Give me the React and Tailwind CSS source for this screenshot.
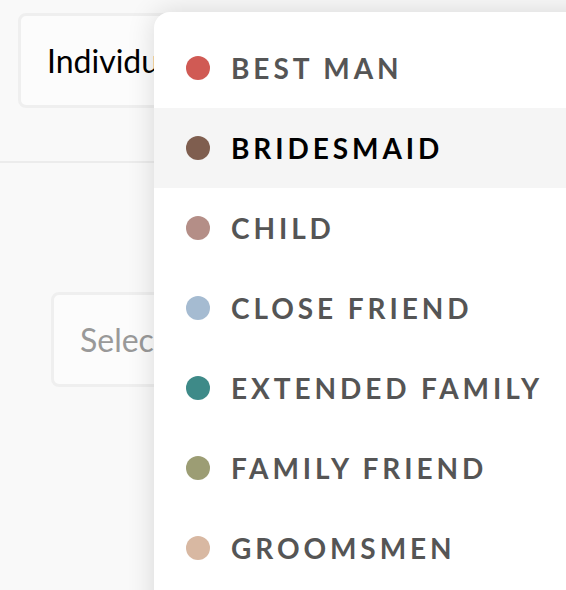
const roles = [
  { name: 'BEST MAN', color: 'bg-[#d05a54]' },
  { name: 'BRIDESMAID', color: 'bg-[#7f5e4f]', active: true },
  { name: 'CHILD', color: 'bg-[#b48e87]' },
  { name: 'CLOSE FRIEND', color: 'bg-[#a5bbd1]' },
  { name: 'EXTENDED FAMILY', color: 'bg-[#3e8a88]' },
  { name: 'FAMILY FRIEND', color: 'bg-[#9c9d74]' },
  { name: 'GROOMSMEN', color: 'bg-[#d8b8a2]' },
];

export default function App() {
  return (
    <div className="relative h-[590px] w-[566px] overflow-hidden bg-[#f9f9f9] font-['Lato',sans-serif]">
      {/* Top field */}
      <div className="px-[18px] pt-[13px] pb-[53px]">
        <div className="flex h-[95px] w-[320px] items-center rounded-[8px] border-[3px] border-[#efefef] bg-[#fcfcfc] pl-[26px] text-[32px] text-black">
          Individual
        </div>
      </div>
      <div className="h-[2px] bg-[#ececec]" />

      {/* Second field */}
      <div className="pl-[51px] pt-[129px]">
        <div className="flex h-[95px] w-[320px] items-center rounded-[8px] border-[3px] border-[#efefef] bg-[#fcfcfc] pl-[26px] text-[32px] text-[#999]">
          Select a role
        </div>
      </div>

      {/* Dropdown */}
      <div className="absolute left-[154px] top-[12px] h-[640px] w-[460px] rounded-tl-[16px] bg-white pt-[16px] shadow-[0_0_28px_rgba(0,0,0,0.14)]">
        {roles.map(role => (
          <div
            key={role.name}
            className={`flex h-[80px] items-center gap-[21px] pl-[32px] ${role.active ? 'bg-[#f5f5f5] text-black' : 'text-[#555]'}`}
          >
            <span className={`h-[24px] w-[24px] shrink-0 rounded-full ${role.color}`} />
            <span className="text-[28px] font-bold tracking-[0.14em]">{role.name}</span>
          </div>
        ))}
      </div>
    </div>
  );
}
